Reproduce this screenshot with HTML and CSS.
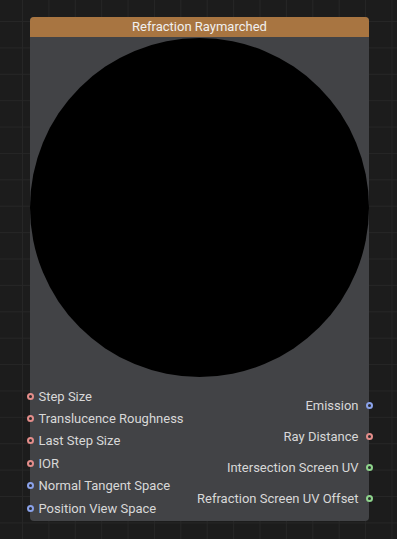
FILE: index.html
```html
<!DOCTYPE html>
<html lang="en">
<head>
    <meta charset="UTF-8">
    <meta name="viewport" content="width=device-width, initial-scale=1.0">
    <title>Refraction Raymarched</title>
    <link rel="stylesheet" href="styles.css">
</head>
<body>
    <div class="canvas">
        <!-- Shader node -->
        <div class="node">
            <div class="node-header">Refraction Raymarched</div>
            <div class="preview">
                <div class="sphere"></div>
            </div>
            <div class="ports">
                <ul class="inputs">
                    <li><span class="dot float"></span>Step Size</li>
                    <li><span class="dot float"></span>Translucence Roughness</li>
                    <li><span class="dot float"></span>Last Step Size</li>
                    <li><span class="dot float"></span>IOR</li>
                    <li><span class="dot vector"></span>Normal Tangent Space</li>
                    <li><span class="dot vector"></span>Position View Space</li>
                </ul>
                <ul class="outputs">
                    <li>Emission<span class="dot vector"></span></li>
                    <li>Ray Distance<span class="dot float"></span></li>
                    <li>Intersection Screen UV<span class="dot uv"></span></li>
                    <li>Refraction Screen UV Offset<span class="dot uv"></span></li>
                </ul>
            </div>
        </div>
    </div>
</body>
</html>
```

FILE: styles.css
```css
html, body {
    margin: 0;
    height: 100%;
}
body {
    font-family: 'Roboto', 'Liberation Sans', sans-serif;
    background-color: #1c1c1c;
    background-image:
        linear-gradient(to right, #262626 1px, transparent 1px),
        linear-gradient(to bottom, #262626 1px, transparent 1px);
    background-size: 26.4px 26.4px;
    background-position: 22px 21px;
    color: #d8d8d8;
    overflow: hidden;
}
.canvas {
    padding: 17px 0 0 30px;
}
.node {
    width: 339px;
    height: 504px;
    background: #424346;
    border-radius: 4px;
    display: flex;
    flex-direction: column;
}
.node-header {
    height: 20px;
    line-height: 20px;
    background: #a87541;
    border-radius: 4px 4px 0 0;
    color: #f0f0f0;
    font-size: 13px;
    text-align: center;
}
.preview {
    height: 339px;
    display: flex;
    justify-content: center;
    align-items: center;
    padding-top: 1px;
}
.sphere {
    width: 339px;
    height: 339px;
    border-radius: 50%;
    background: #000;
}
.ports {
    flex: 1;
    display: flex;
    justify-content: space-between;
}
.ports ul {
    list-style: none;
    margin: 0;
    padding: 0;
    font-size: 13px;
}
.inputs {
    padding-top: 8px !important;
    margin-left: -3.5px !important;
}
.inputs li {
    height: 22.4px;
    display: flex;
    align-items: center;
    gap: 5px;
}
.outputs {
    padding-top: 13px !important;
    margin-right: -3.5px !important;
}
.outputs li {
    height: 31px;
    display: flex;
    align-items: center;
    justify-content: flex-end;
    gap: 7px;
}
.dot {
    width: 3px;
    height: 3px;
    border: 2px solid;
    border-radius: 50%;
    background: #2b2b2d;
    flex-shrink: 0;
}
.dot.float {
    border-color: #e48d8a;
}
.dot.vector {
    border-color: #8aa2ea;
}
.dot.uv {
    border-color: #8ed48c;
}
```
